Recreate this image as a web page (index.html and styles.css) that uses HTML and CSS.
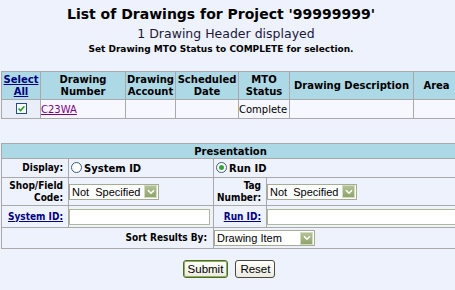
FILE: index.html
```html
<!DOCTYPE html>
<html lang="en">
<head>
<meta charset="UTF-8">
<meta name="viewport" content="width=device-width, initial-scale=1.0">
<title>List of Drawings</title>
<link rel="stylesheet" href="styles.css">
</head>
<body>
  <div class="page">
    <h1 class="title">List of Drawings for Project '99999999'</h1>
    <p class="count">1 Drawing Header displayed</p>
    <p class="hint">Set Drawing MTO Status to COMPLETE for selection.</p>

    <table class="grid drawings">
      <colgroup>
        <col class="c-select">
        <col class="c-number">
        <col class="c-account">
        <col class="c-date">
        <col class="c-status">
        <col class="c-desc">
        <col class="c-area">
      </colgroup>
      <thead>
        <tr>
          <th><a href="#" class="head-link">Select<br>All</a></th>
          <th>Drawing<br>Number</th>
          <th>Drawing<br>Account</th>
          <th>Scheduled<br>Date</th>
          <th>MTO<br>Status</th>
          <th>Drawing Description</th>
          <th>Area</th>
        </tr>
      </thead>
      <tbody>
        <tr>
          <td class="check-cell"><span class="checkbox checked"><svg width="7" height="7" viewBox="0 0 7 7"><path d="M0.5 3.5 L2.6 5.6 L6.5 1.2" fill="none" stroke="#21A121" stroke-width="1.6"/></svg></span></td>
          <td class="pad"><a href="#" class="drawing-link">C23WA</a></td>
          <td></td>
          <td></td>
          <td class="pad">Complete</td>
          <td></td>
          <td></td>
        </tr>
      </tbody>
    </table>

    <form class="options" onsubmit="return false">
      <table class="grid presentation">
        <colgroup>
          <col class="c-label">
          <col class="c-value">
          <col class="c-label2">
          <col class="c-value2">
        </colgroup>
        <tr class="row-head">
          <th colspan="4">Presentation</th>
        </tr>
        <tr class="row-display">
          <td class="label">Display:</td>
          <td class="value"><span class="radio"></span><b>System ID</b></td>
          <td colspan="2" class="value"><span class="radio on"><i></i></span><b>Run ID</b></td>
        </tr>
        <tr class="row-code">
          <td class="label">Shop/Field Code:</td>
          <td class="value">
            <span class="select w-code"><span class="select-text">Not&nbsp; Specified</span><span class="select-arrow"><svg width="8" height="6" viewBox="0 0 8 6"><path d="M1 1.2 L4 4.2 L7 1.2" fill="none" stroke="#fff" stroke-width="1.6"/></svg></span></span>
          </td>
          <td class="label">Tag Number:</td>
          <td class="value">
            <span class="select w-code"><span class="select-text">Not&nbsp; Specified</span><span class="select-arrow"><svg width="8" height="6" viewBox="0 0 8 6"><path d="M1 1.2 L4 4.2 L7 1.2" fill="none" stroke="#fff" stroke-width="1.6"/></svg></span></span>
          </td>
        </tr>
        <tr class="row-id">
          <td class="label"><a href="#" class="head-link">System ID:</a></td>
          <td class="value"><input type="text" class="field w-sys"></td>
          <td class="label"><a href="#" class="head-link">Run ID:</a></td>
          <td class="value"><input type="text" class="field w-run"></td>
        </tr>
        <tr class="row-sort">
          <td colspan="2" class="label sort-label">Sort Results By:</td>
          <td colspan="2" class="value">
            <span class="select w-sort"><span class="select-text">Drawing Item</span><span class="select-arrow"><svg width="8" height="6" viewBox="0 0 8 6"><path d="M1 1.2 L4 4.2 L7 1.2" fill="none" stroke="#fff" stroke-width="1.6"/></svg></span></span>
          </td>
        </tr>
      </table>
      <div class="actions">
        <button type="submit" class="btn btn-default">Submit</button>
        <button type="reset" class="btn">Reset</button>
      </div>
    </form>
  </div>
</body>
</html>
```

FILE: styles.css
```css
body {
  margin: 0;
  background: #eef2fd;
  font-family: "DejaVu Sans", Verdana, sans-serif;
  font-size: 10px;
  color: #000;
  overflow: hidden;
}

.page {
  width: 458px;
  padding-top: 6px;
}

.title {
  margin: 0;
  width: 442px;
  font-size: 14px;
  line-height: 17px;
  text-align: center;
}

.count {
  margin: 3px 0 0;
  width: 452px;
  font-size: 12.5px;
  line-height: 15px;
  text-align: center;
  color: #1c1838;
}

.hint {
  margin: 3px 0 0;
  width: 442px;
  font-size: 9px;
  font-weight: bold;
  line-height: 11px;
  text-align: center;
}

/* tables */
.grid {
  border-collapse: collapse;
  table-layout: fixed;
  margin-left: 1px;
}

.grid th,
.grid td {
  border: 1px solid #a9a9a9;
  padding: 0;
}

.grid th {
  background: #add8e6;
  font-weight: bold;
  text-align: center;
}

.drawings {
  width: 458px;
  margin-top: 16px;
}

.c-select { width: 39px; }
.c-number { width: 85px; }
.c-account { width: 50px; }
.c-date { width: 63px; }
.c-status { width: 51px; }
.c-desc { width: 124px; }
.c-area { width: 46px; }

.drawings thead th {
  height: 27px;
  line-height: 12px;
}

.drawings tbody td {
  height: 18px;
  background: #f7f8ff;
}

.drawings td.check-cell {
  background: #e9eef9;
  text-align: center;
}

.pad {
  padding-left: 3px;
}

.head-link {
  color: #000080;
}

.drawing-link {
  color: #800080;
}

.checkbox {
  display: inline-flex;
  align-items: center;
  justify-content: center;
  width: 9px;
  height: 9px;
  border: 1px solid #1c5180;
  background: #fff;
  vertical-align: middle;
  margin-top: -2px;
}

/* presentation */
.options {
  margin: 24px 0 0;
}

.presentation {
  width: 458px;
}

.c-label { width: 67px; }
.c-value { width: 145px; }
.c-label2 { width: 53px; }
.c-value2 { width: 193px; }

.presentation td {
  background: #eef2fd;
}

.row-head th { height: 14px; }
.row-display td { height: 18px; }
.row-code td { height: 27px; }
.row-id td { height: 21px; }
.row-sort td { height: 20px; }

.grid td.label {
  text-align: right;
  font-family: "DejaVu Sans Condensed", Tahoma, sans-serif;
  font-weight: bold;
  padding-right: 5px;
  line-height: 12px;
}

.grid td.sort-label {
  padding-right: 6px;
}

.value {
  padding-left: 1px;
  white-space: nowrap;
}

.radio {
  display: inline-block;
  position: relative;
  width: 9px;
  height: 9px;
  border: 1px solid #3c5a7a;
  border-radius: 50%;
  background: #fff;
  margin: 0 2px 0 2px;
  vertical-align: -1px;
}

.radio.on i {
  position: absolute;
  left: 2px;
  top: 2px;
  width: 5px;
  height: 5px;
  border-radius: 50%;
  background: #3aa23a;
}

.select {
  display: inline-flex;
  align-items: center;
  justify-content: space-between;
  height: 14px;
  border: 1px solid #a5ac93;
  background: #fff;
  font-family: "Liberation Sans", Arial, sans-serif;
  font-size: 11px;
  vertical-align: middle;
}

.w-code { width: 88px; }
.w-sort { width: 99px; }

.select-text {
  padding-left: 2px;
}

.select-arrow {
  display: inline-flex;
  align-items: center;
  justify-content: center;
  width: 11px;
  height: 11px;
  margin-right: 1px;
  border: 1px solid #d4dcbf;
  background: linear-gradient(#b3c296, #8fa46c);
}

.field {
  box-sizing: border-box;
  height: 16px;
  border: 1px solid #b0b89a;
  background: #fff;
  padding: 0 2px;
  margin: 0;
  vertical-align: middle;
}

.w-sys { width: 141px; }
.w-run { width: 190px; }

.actions {
  display: flex;
  justify-content: center;
  gap: 7px;
  margin-top: 11px;
}

.btn {
  height: 18px;
  padding: 0 4px;
  border: 1px solid #4a4a3a;
  border-radius: 3px;
  background: linear-gradient(#fffffb, #ecebe2);
  font-family: "Liberation Sans", Arial, sans-serif;
  font-size: 11.5px;
  color: #000;
}

.btn-default {
  border-color: #4f6a2a;
  box-shadow: inset 0 0 0 1px #8fb35a;
}
```
